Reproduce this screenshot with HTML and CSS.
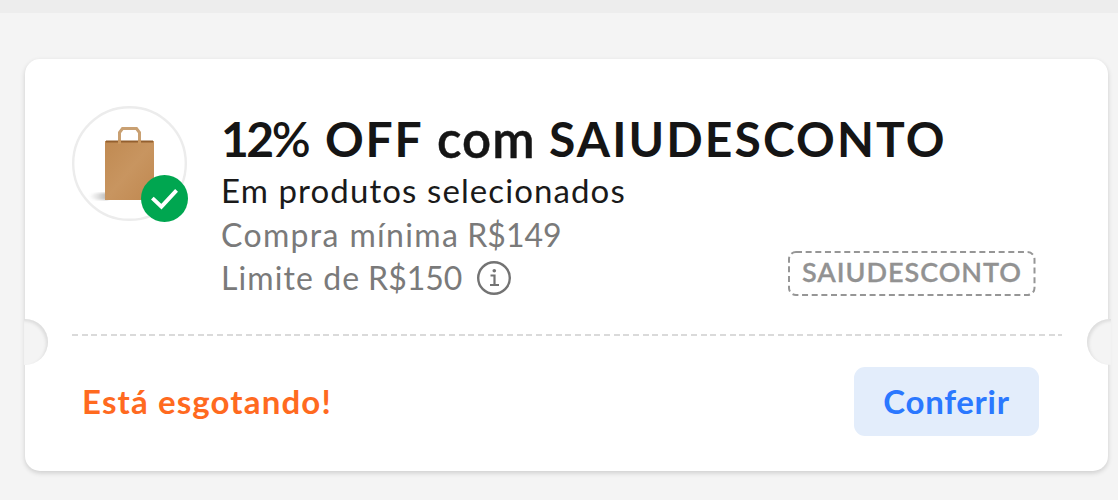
FILE: index.html
```html
<!DOCTYPE html>
<html lang="pt-BR">
<head>
<meta charset="utf-8">
<title>Cupom</title>
<link rel="stylesheet" href="styles.css">
</head>
<body>
<div class="topbar"></div>
<main class="coupon">
  <section class="details">
    <div class="thumb">
      <svg class="bag" viewBox="0 0 115 115" aria-hidden="true">
        <defs>
          <linearGradient id="paper" x1="0" y1="0" x2="1" y2="1">
            <stop offset="0" stop-color="#c08a52"/>
            <stop offset=".5" stop-color="#c89560"/>
            <stop offset="1" stop-color="#c08850"/>
          </linearGradient>
          <linearGradient id="shade" x1="0" x2="1">
            <stop offset="0" stop-color="#999" stop-opacity="0"/>
            <stop offset="1" stop-color="#888" stop-opacity=".6"/>
          </linearGradient>
          <filter id="soft"><feGaussianBlur stdDeviation="1"/></filter>
        </defs>
        <circle cx="57.5" cy="57.5" r="56.3" fill="#fff" stroke="#ececec" stroke-width="2.400"/>
        <path d="M17 90Q22 86 36 87V94H29Q20 94 17 90Z" fill="url(#shade)" filter="url(#soft)"/>
        <path d="M47.500 37V26.500L50.500 22.500H64.500L67.500 26.500V37" fill="none" stroke="#c9a072" stroke-width="3"/>
        <path d="M33 35H82V94H33Z" fill="url(#paper)"/>
        <path d="M34 35.500H81" stroke="#94602f" stroke-width="2"/>
        <path d="M46 34V38H49V34M66 34V38H69V34" fill="#c9975f"/>
      </svg>
      <svg class="check" viewBox="0 0 46 46" aria-hidden="true">
        <circle cx="23" cy="23" r="23" fill="#00a650"/>
        <path d="M12.500 24L20 31L33.500 16.500" fill="none" stroke="#fff" stroke-width="3.800" stroke-linecap="square"/>
      </svg>
    </div>
    <div class="copy">
      <h1 class="title"><span class="w1">12<span class="percent">%</span></span><span class="w2">OFF</span><span class="w3">com</span><span class="w4">SAIUDESCONTO</span></h1>
      <p class="scope">Em produtos selecionados</p>
      <p class="rule minimum">Compra mínima <span class="amount">R$149</span></p>
      <p class="rule limit"><span class="label">Limite de <span class="amount">R$150</span></span>
        <svg class="info" viewBox="0 0 36 36" aria-hidden="true">
          <circle cx="18" cy="18" r="15.800" fill="none" stroke="#737373" stroke-width="2.400"/>
          <path d="M14.500 15.500H18.500V24.500M14 25H23" fill="none" stroke="#737373" stroke-width="2.200"/>
          <circle cx="18.300" cy="10.800" r="1.800" fill="#737373"/>
        </svg>
      </p>
    </div>
    <div class="code">
      <svg class="code-frame" viewBox="0 0 248 45" aria-hidden="true"><rect x="1" y="1" width="245.500" height="43" rx="7" fill="none" stroke="#969696" stroke-width="2" stroke-dasharray="6 3.650"/></svg>
      <span class="code-text">SAIUDESCONTO</span>
    </div>
  </section>
  <div class="divider"></div>
  <section class="footer">
    <span class="status">Está esgotando!</span>
    <a class="action">Conferir</a>
  </section>
  <i class="notch left"></i>
  <i class="notch right"></i>
</main>
</body>
</html>
```
FILE: styles.css
```css
* { box-sizing: border-box; }
body { margin: 0; height: 500px; overflow: hidden; background: #f4f4f4; font-family: Lato, sans-serif; }
.topbar { height: 13px; background: #ededed; }
.coupon { position: relative; width: 1083px; height: 412px; margin: 46px 0 0 25px; border-radius: 15px; background: #fff; box-shadow: 0 2px 5px rgba(0,0,0,.16); display: flex; flex-direction: column; }
.details { height: 275px; display: flex; padding: 47px 73px 0 47px; }
.thumb { position: relative; width: 115px; height: 115px; flex: none; }
.bag { display: block; width: 115px; height: 115px; }
.check { position: absolute; right: -1px; bottom: -1px; width: 47px; height: 47px; }
.copy { margin-left: 34px; width: 567px; flex: none; white-space: nowrap; }
h1, p { margin: 0; }
.title { height: 59px; margin-top: 3px; line-height: 59px; font-size: 48px; font-weight: 700; color: #151515; display: flex; }
.title > span { flex: none; }
.w1 { width: 104px; letter-spacing: -2.5px; }
.percent { font-weight: 600; }
.w2 { width: 112px; letter-spacing: 1.8px; }
.w3 { width: 112px; font-size: 51px; font-weight: 600; letter-spacing: 1px; -webkit-text-stroke: .5px #151515; }
.w4 { letter-spacing: 2.1px; }
.scope { height: 45px; line-height: 44px; font-size: 33px; letter-spacing: 1.1px; color: #1a1a1a; }
.rule { height: 44px; line-height: 44px; font-size: 32px; letter-spacing: 1.35px; color: #7a7a7a; }
.amount { letter-spacing: 0; margin-left: -1.5px; }
.limit { height: 43px; line-height: 43px; letter-spacing: 1.1px; display: flex; align-items: center; }
.label { margin-top: -2px; }
.info { width: 36px; height: 36px; margin-left: 14px; margin-top: -1px; }
.code { position: relative; width: 248px; height: 45px; margin-top: 145px; display: flex; align-items: center; justify-content: center; flex: none; }
.code-frame { position: absolute; inset: 0; width: 248px; height: 45px; }
.code-text { margin-top: -4px; font-size: 27px; letter-spacing: .95px; color: #929292; font-weight: 600; -webkit-text-stroke: .3px #929292; }
.divider { height: 2px; margin: 0 46px 0 47px; background: repeating-linear-gradient(90deg, #dadada 0 6px, transparent 6px 9.67px); }
.footer { height: 134px; display: flex; justify-content: space-between; align-items: center; padding: 0 69px 3px 57px; }
.status { margin-top: -2px; font-size: 33px; letter-spacing: 1.15px; font-weight: 700; color: #ff6a1f; white-space: nowrap; }
.action { width: 185px; height: 69px; padding-bottom: 2px; border-radius: 11px; background: #e3edfb; display: flex; align-items: center; justify-content: center; font-size: 33px; letter-spacing: .7px; font-weight: 700; color: #2b78ff; }
.notch { position: absolute; top: 260px; width: 24px; height: 46px; background: #f4f4f4; }
.left { left: -1px; border-radius: 0 23px 23px 0; box-shadow: inset -2px 2px 3px #dedede; }
.right { right: -3px; border-radius: 23px 0 0 23px; box-shadow: inset 2px 2px 3px #dedede; }
```
